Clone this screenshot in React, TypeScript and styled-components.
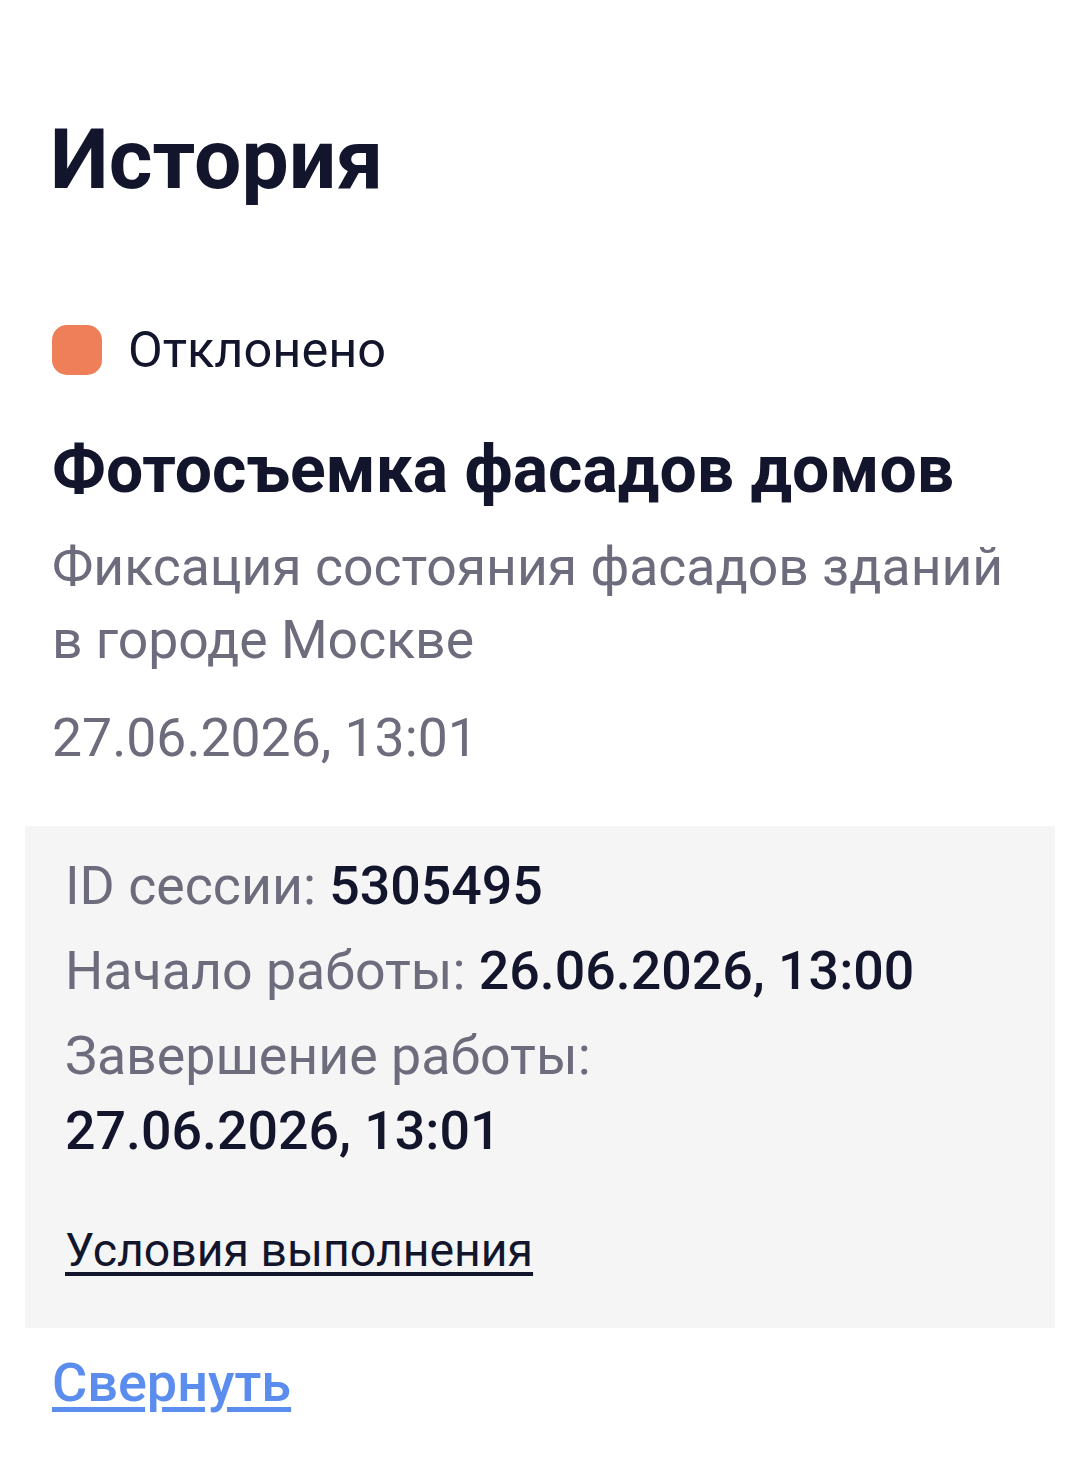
import styled, { createGlobalStyle } from "styled-components";

const GlobalStyle = createGlobalStyle`
  body {
    margin: 0;
    background: #ffffff;
    font-family: Roboto, "Noto Sans", sans-serif;
    color: #12152b;
  }
`;

export default function App() {
  return (
    <>
      <GlobalStyle />
      <Page>
        <Heading>История</Heading>
        <Status>
          <StatusDot />
          <StatusText>Отклонено</StatusText>
        </Status>
        <TaskTitle>Фотосъемка фасадов домов</TaskTitle>
        <TaskDescription>Фиксация состояния фасадов зданий в городе Москве</TaskDescription>
        <TaskDate>27.06.2026, 13:01</TaskDate>
        <Details>
          <DetailRow>
            <Label>ID сессии: </Label>
            <Value>5305495</Value>
          </DetailRow>
          <DetailRow>
            <Label>Начало работы: </Label>
            <Value>26.06.2026, 13:00</Value>
          </DetailRow>
          <DetailRow>
            <Label>Завершение работы: </Label>
            <Value>27.06.2026, 13:01</Value>
          </DetailRow>
          <TermsLink href="#">Условия выполнения</TermsLink>
        </Details>
        <CollapseLink href="#">Свернуть</CollapseLink>
      </Page>
    </>
  );
}

const Page = styled.div`
  padding: 110px 25px 40px;
  display: flex;
  flex-direction: column;
  align-items: flex-start;
`;

const Heading = styled.h1`
  margin: 0 25px;
  font-size: 84px;
  line-height: 100px;
  font-weight: 700;
  color: #12152b;
`;

const Status = styled.div`
  display: flex;
  align-items: center;
  gap: 26px;
  margin: 115px 27px 0;
  height: 50px;
`;

const StatusDot = styled.span`
  width: 50px;
  height: 50px;
  border-radius: 15px;
  background: #ee7f58;
`;

const StatusText = styled.span`
  font-size: 50.5px;
  line-height: 50px;
  color: #12152b;
`;

const TaskTitle = styled.h2`
  margin: 55px 27px 0;
  font-size: 66px;
  line-height: 80px;
  font-weight: 700;
  color: #12152b;
`;

const TaskDescription = styled.p`
  margin: 20px 27px 0;
  font-size: 53.5px;
  line-height: 73px;
  color: #6d6c7c;
`;

const TaskDate = styled.p`
  margin: 25px 27px 0;
  font-size: 53.5px;
  line-height: 73px;
  color: #6d6c7c;
`;

const Details = styled.div`
  align-self: stretch;
  margin-top: 52px;
  padding: 22px 40px 40px;
  background: #f5f5f5;
  display: flex;
  flex-direction: column;
  align-items: flex-start;
  gap: 10px;
`;

const DetailRow = styled.p`
  margin: 0;
  font-size: 53.7px;
  line-height: 75px;
`;

const Label = styled.span`
  color: #6d6c7c;
`;

const Value = styled.span`
  color: #12152b;
  font-weight: 500;
  white-space: nowrap;
`;

const TermsLink = styled.a`
  margin-top: 35px;
  font-size: 46.4px;
  line-height: 75px;
  color: #12152b;
  text-decoration: underline;
  text-underline-offset: 6px;
`;

const CollapseLink = styled.a`
  margin: 17px 27px 0;
  font-size: 54px;
  line-height: 75px;
  font-weight: 500;
  color: #5b8def;
  text-decoration: underline;
  text-underline-offset: 6px;
`;
